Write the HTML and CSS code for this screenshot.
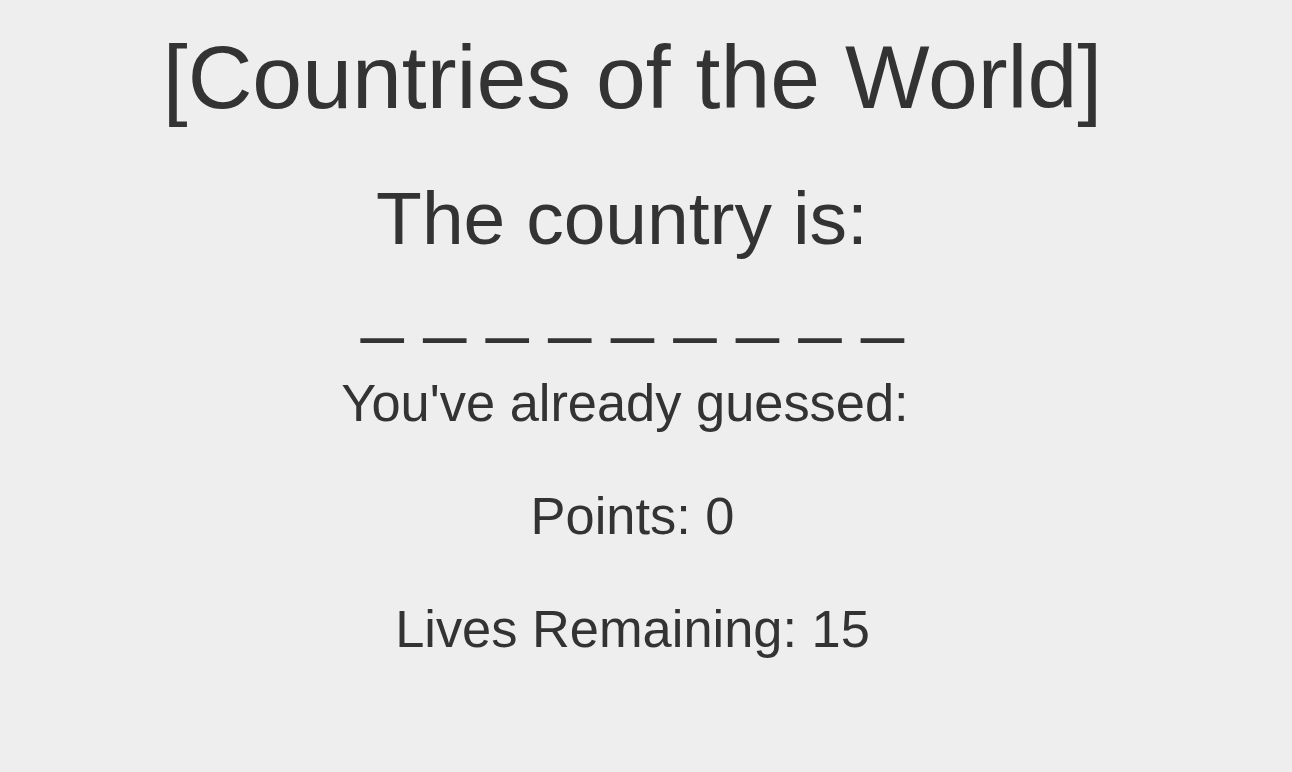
FILE: index.html
```html
<!DOCTYPE html>
<html lang="en">
<head>
<meta charset="utf-8">
<title>Countries of the World</title>
<link rel="stylesheet" href="styles.css">
</head>
<body>
<main class="game">
  <h1 class="title">[Countries of the World]</h1>
  <h2 class="prompt">The country is:</h2>
  <div class="word">_ _ _ _ _ _ _ _ _</div>
  <p class="stat guessed">You've already guessed:</p>
  <p class="stat">Points: 0</p>
  <p class="stat">Lives Remaining: 15</p>
</main>
</body>
</html>
```
FILE: styles.css
```css
html, body {
  margin: 0;
  padding: 0;
  background: #eeeeee;
}
body {
  color: #333333;
  font-family: "Liberation Sans", Arial, sans-serif;
}
.game {
  width: 1265px;
  text-align: center;
  display: flex;
  flex-direction: column;
  align-items: stretch;
}
.title {
  margin: 27px 0 0;
  font-size: 89.6px;
  font-weight: normal;
  line-height: 100px;
}
.prompt {
  margin: 46px 0 0;
  font-size: 75px;
  font-weight: normal;
  line-height: 90px;
  padding-right: 21px;
}
.word {
  margin: 9px 0 0;
  font-size: 75px;
  line-height: 60px;
  white-space: pre;
}
.stat {
  margin: 53px 0 0;
  font-size: 52.4px;
  line-height: 60px;
}
.guessed {
  margin-top: 41px;
  padding-right: 15px;
}
```
